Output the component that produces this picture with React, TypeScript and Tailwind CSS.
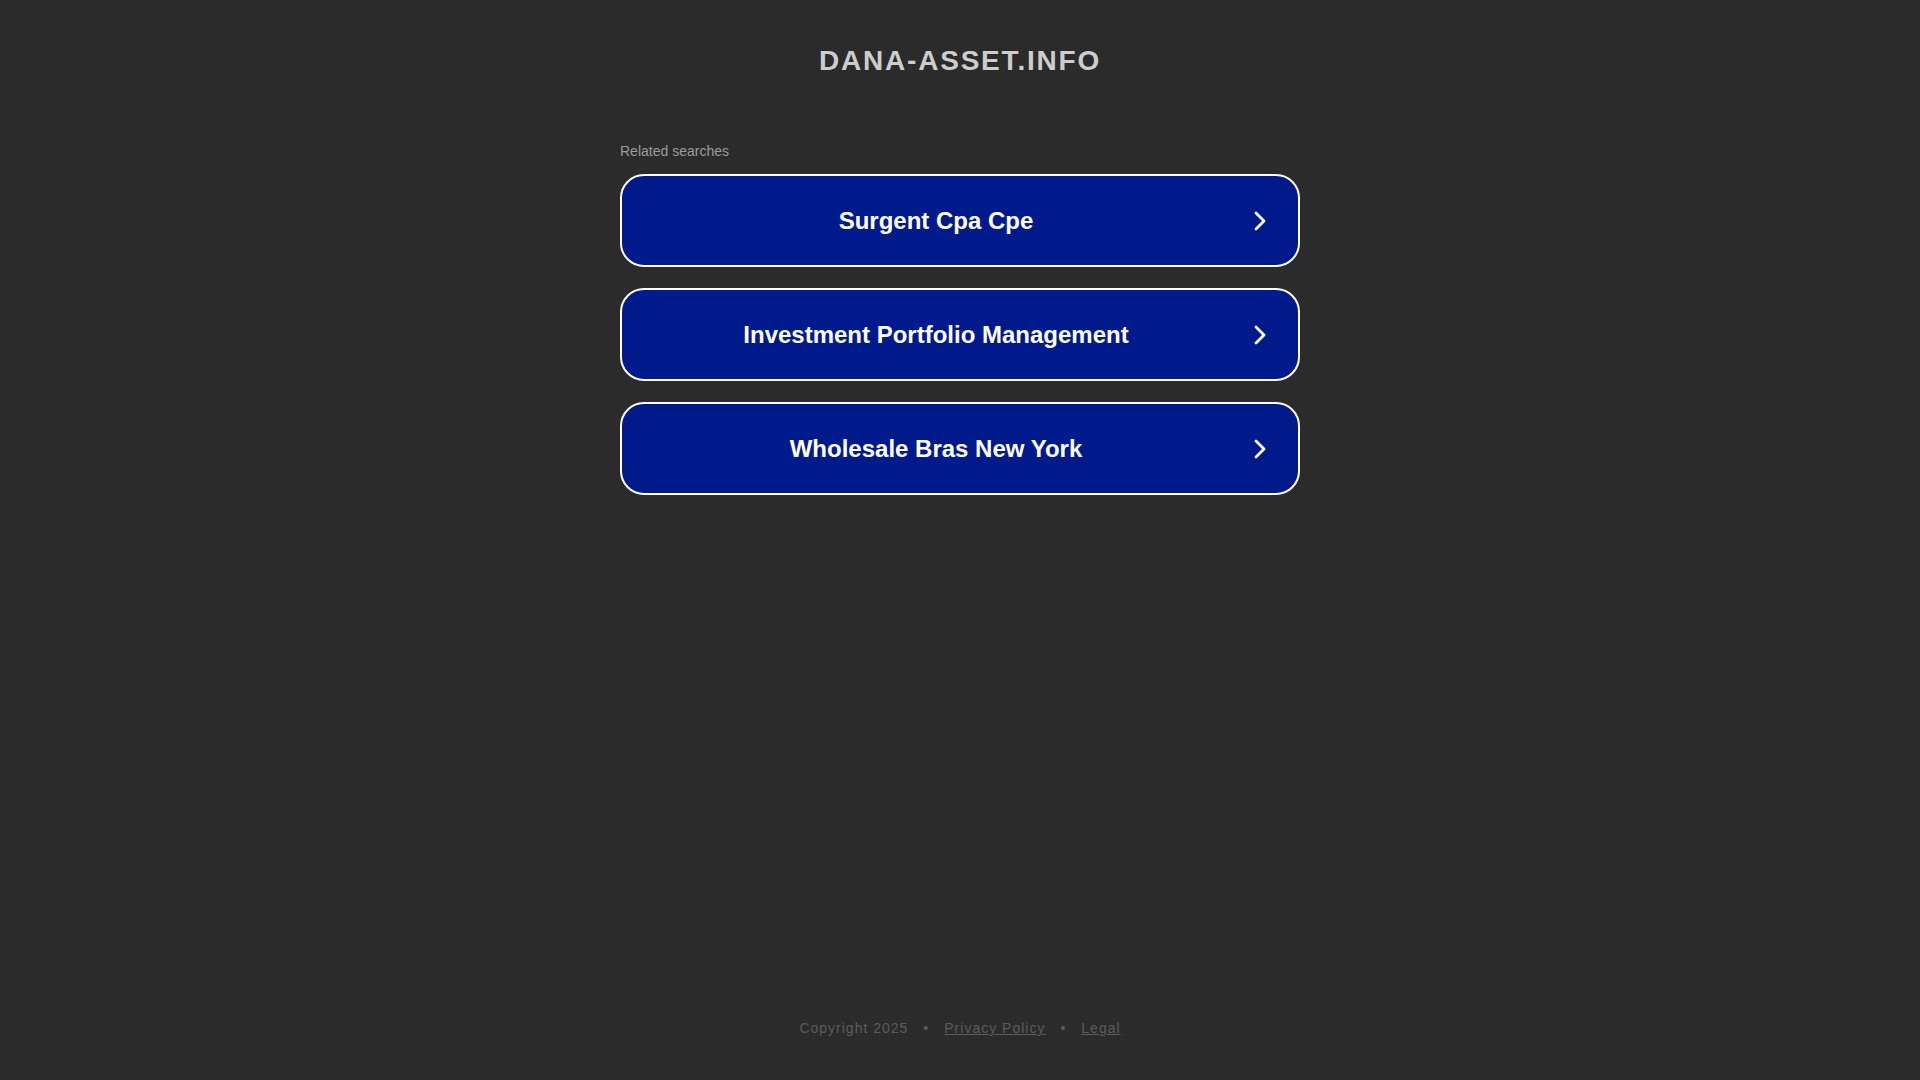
const searches = ['Surgent Cpa Cpe', 'Investment Portfolio Management', 'Wholesale Bras New York']

function Chevron(): React.JSX.Element {
  return (
    <svg width="12" height="20" viewBox="0 0 12 20" fill="none" className="ml-1 mr-[32px] shrink-0">
      <polyline
        points="2,2 10,10 2,18"
        stroke="#ffffff"
        strokeWidth="2.8"
        strokeLinecap="round"
        strokeLinejoin="round"
      />
    </svg>
  )
}

export default function App(): React.JSX.Element {
  return (
    <div
      className="min-h-screen flex flex-col bg-[#2b2b2b]"
      style={{ fontFamily: '"Liberation Sans", Arial, sans-serif' }}
    >
      {/* Domain title */}
      <header className="pt-[45px] text-center">
        <h1 className="text-[28px] leading-[32px] font-bold tracking-[1.8px] text-[#cdcdcd]">
          DANA-ASSET.INFO
        </h1>
      </header>

      {/* Related searches */}
      <main className="w-[680px] mx-auto mt-[64px]">
        <p className="text-[14px] leading-[20px] text-[#9b9b9b]">Related searches</p>
        <div className="mt-[13px] flex flex-col gap-[21px]">
          {searches.map((s) => (
            <a
              key={s}
              href="#"
              className="h-[93px] flex items-center rounded-[24px] border-2 border-white bg-[#011a8b] text-white"
            >
              <span className="flex-1 text-center text-[24px] font-bold">{s}</span>
              <Chevron />
            </a>
          ))}
        </div>
      </main>

      {/* Footer */}
      <footer className="mt-auto pb-[42px] text-center text-[14px] leading-[20px] tracking-[1px] text-[#5c5c5c]">
        <span>Copyright 2025</span>
        <span className="mx-[15px]">•</span>
        <a href="#" className="underline">Privacy Policy</a>
        <span className="mx-[15px]">•</span>
        <a href="#" className="underline">Legal</a>
      </footer>
    </div>
  )
}
